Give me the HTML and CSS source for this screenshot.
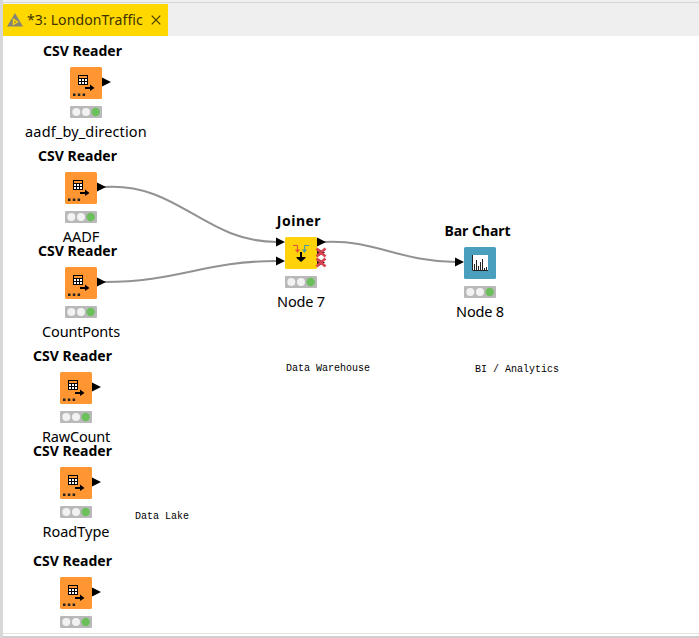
FILE: index.html
```html
<!DOCTYPE html>
<html lang="en">
<head>
<meta charset="utf-8">
<title>LondonTraffic</title>
<link rel="stylesheet" href="styles.css">
</head>
<body>
<svg class="defs" aria-hidden="true">
  <symbol id="reader" viewBox="0 0 48 40">
    <rect width="32" height="32" rx="1.5" fill="#ff9632"/>
    <path d="M32 10.500v9l9-4.500z" fill="#000"/>
    <path d="M8 8h10v10H8z" fill="#000"/>
    <path d="M9 9h8v2H9z" fill="#ff9632"/>
    <path d="M9 12h2v2H9zm3 0h2v2h-2zm3 0h2v2h-2zM9 15h2v2H9zm3 0h2v2h-2zm3 0h2v2h-2z" fill="#fff"/>
    <path d="M15 20h5v-2.500l4.500 3.500-4.500 3V22h-5z" fill="#000"/>
    <path d="M3 26.500h2.500V29H3zm4.800 0h2.500V29H7.800zm4.800 0h2.500V29h-2.500z" fill="#222"/>
  </symbol>
  <symbol id="status" viewBox="0 0 32 12">
    <rect width="32" height="12" rx="1" fill="#b9b9b9"/>
    <circle cx="6.300" cy="6" r="4" fill="#f2f2f2"/>
    <circle cx="16" cy="6" r="4" fill="#f2f2f2"/>
    <circle cx="25.700" cy="6" r="4.200" fill="#6bc05c"/>
  </symbol>
</svg>
<div class="tabs">
  <div class="tab">
    <svg class="logo" viewBox="0 0 16 14"><path d="M8 0l8 13.500H0z" fill="#858576"/><path d="M5.800 5l6 4-6 3.500z" fill="#ffd800"/><path d="M7.300 7.500l2.500 1.500-2.500 1.500z" fill="#a89a45"/></svg>
    <span class="tab-name">*3: LondonTraffic</span>
    <svg class="close" viewBox="0 0 10 10"><path d="M.7.700l8.600 8.600M9.300.700L.7 9.300" stroke="#443900" stroke-width="1.200"/></svg>
  </div>
</div>
<main class="canvas">
  <svg class="wires" viewBox="0 0 699 638" fill="none" stroke="#929292" stroke-width="2">
    <path d="M104 187C178 182 204 242 277 242"/>
    <path d="M104 282C178 282 204 261 277 261"/>
    <path d="M324 242C374 239 400 262 456 262"/>
  </svg>
  <section class="node n1"><h2>CSV Reader</h2><svg class="icon"><use href="#reader" width="48" height="40"/></svg><svg class="status"><use href="#status"/></svg><p class="long">aadf_by_direction</p></section>
  <section class="node n2"><h2>CSV Reader</h2><svg class="icon"><use href="#reader" width="48" height="40"/></svg><svg class="status"><use href="#status"/></svg><p>AADF</p></section>
  <section class="node n3"><h2>CSV Reader</h2><svg class="icon"><use href="#reader" width="48" height="40"/></svg><svg class="status"><use href="#status"/></svg><p class="tight">CountPonts</p></section>
  <section class="node n4"><h2>CSV Reader</h2><svg class="icon"><use href="#reader" width="48" height="40"/></svg><svg class="status"><use href="#status"/></svg><p class="tight">RawCount</p></section>
  <section class="node n5"><h2>CSV Reader</h2><svg class="icon"><use href="#reader" width="48" height="40"/></svg><svg class="status"><use href="#status"/></svg><p>RoadType</p></section>
  <section class="node n6"><h2>CSV Reader</h2><svg class="icon"><use href="#reader" width="48" height="40"/></svg><svg class="status"><use href="#status"/></svg></section>
  <section class="node joiner"><h2>Joiner</h2>
    <svg class="icon" viewBox="0 0 32 32">
      <rect width="32" height="32" rx="1.500" fill="#ffd20a"/>
      <path d="M-9 .5v9l9-4.500zM-9 19.500v9L0 24zM32 .5v9l9-4.500z" fill="#000"/>
      <path d="M8 8.500h4.500V13" fill="none" stroke="#e8503c"/><path d="M10 12.500h5l-2.500 3.500z" fill="#e8503c"/>
      <path d="M24 8.500h-4.500V13" fill="none" stroke="#4a9ba8"/><path d="M17 12.500h5L19.500 16z" fill="#4a9ba8"/>
      <path d="M15 15h2v5h3.500v1L16 25l-4.500-4v-1H15z" fill="#000"/>
      <path d="M32 11l8 4.500-8 4.500M32 21l8 4.500-8 4.500" fill="#222"/>
      <path d="M31.500 11.500l9 8m0-8l-9 8M31.500 21.500l9 8m0-8l-9 8" stroke="#d94450" stroke-width="2.600"/>
    </svg>
    <svg class="status"><use href="#status"/></svg><p class="tight">Node 7</p></section>
  <section class="node chart"><h2>Bar Chart</h2>
    <svg class="icon" viewBox="0 0 32 32">
      <rect width="32" height="32" rx="1.500" fill="#4a9fbf"/>
      <path d="M-9 10.500v9l9-4.500z" fill="#000"/>
      <path d="M8 8h16v16H8z" fill="#fff"/>
      <path d="M8.500 8v15.500H24M10.500 17v6M12.500 13v10M14.500 19v4M16.500 15v8M18.500 12v11M20.500 21v2M22.500 20v3" fill="none" stroke="#222"/>
    </svg>
    <svg class="status"><use href="#status"/></svg><p class="tight">Node 8</p></section>
  <span class="note lake">Data Lake</span>
  <span class="note warehouse">Data Warehouse</span>
  <span class="note bi">BI / Analytics</span>
</main>
<footer class="edge"></footer>
</body>
</html>
```
FILE: styles.css
```css
* { box-sizing: border-box; }
body {
  margin: 0;
  height: 638px;
  overflow: hidden;
  position: relative;
  display: flex;
  flex-direction: column;
  background: #fff;
  border-left: 3px solid #d7d7d7;
  font-family: "Noto Sans", "Open Sans", sans-serif;
  color: #000;
}
.defs { position: absolute; width: 0; height: 0; }
.tabs {
  height: 36px;
  padding-top: 4px;
  background: linear-gradient(#efefef 2px, #d6d6d6 2px, #d6d6d6 3px, #efefef 3px);
}
.tab {
  width: 165px;
  height: 32px;
  padding-left: 4px;
  display: flex;
  align-items: center;
  background: #ffd800;
}
.logo { width: 16px; height: 14px; }
.tab-name {
  width: 117px;
  margin-left: 4px;
  font-size: 14px;
  letter-spacing: 0.13px;
  line-height: 18px;
  padding-bottom: 1px;
  white-space: nowrap;
  color: #3d3300;
}
.close { width: 10px; height: 10px; margin-left: 7px; }
.canvas { flex: 1; }
.wires { position: absolute; left: -3px; top: 0; width: 699px; height: 638px; }
.node {
  position: absolute;
  width: 140px;
  display: flex;
  flex-direction: column;
  align-items: center;
}
.node h2 {
  margin: 0 7px 0 0;
  height: 26px;
  font-size: 14px;
  font-weight: 700;
  line-height: 20px;
  white-space: nowrap;
}
.icon { width: 32px; height: 32px; overflow: visible; }
.status { width: 32px; height: 12px; margin-top: 7px; }
.node p {
  margin: 3px 0 0;
  font-size: 14.5px;
  line-height: 20px;
  white-space: nowrap;
}
.node .long { letter-spacing: 0.15px; }
.node .tight { letter-spacing: -0.2px; }
.n1 { left: 13px; top: 41px; }
.n2 { left: 8px; top: 146px; }
.n3 { left: 8px; top: 241px; }
.n4 { left: 3px; top: 346px; }
.n5 { left: 3px; top: 441px; }
.n6 { left: 3px; top: 551px; }
.joiner { left: 228px; top: 211px; }
.chart { left: 407px; top: 221px; }
.node.joiner h2 { margin-right: 4px; letter-spacing: 0.5px; }
.node.chart h2 { margin-right: 5px; letter-spacing: -0.05px; }
.note {
  position: absolute;
  font: 10px/14px "Liberation Mono", monospace;
  white-space: pre;
}
.lake { left: 132px; top: 510px; }
.warehouse { left: 283px; top: 362px; }
.bi { left: 472px; top: 363px; }
.edge {
  height: 5px;
  background: linear-gradient(#e2e2e2 0 1px, #fff 1px 3px, #cfcfcf 3px 5px);
}
```
